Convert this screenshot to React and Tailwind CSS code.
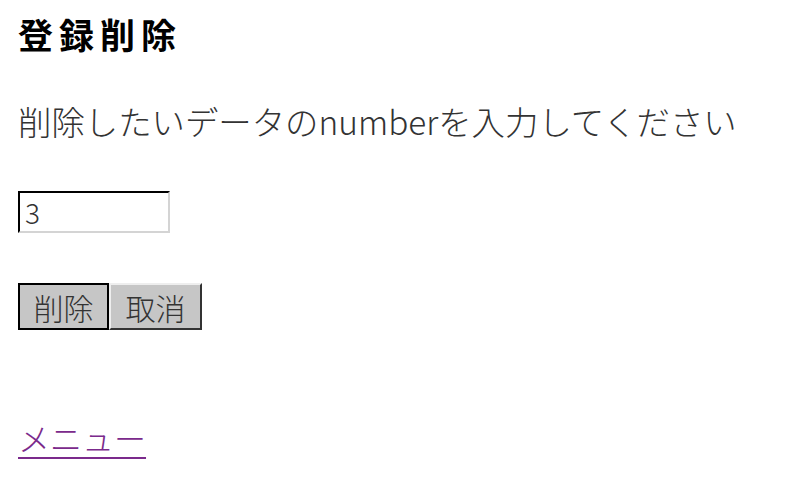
import React, { useState } from 'react';

const App = () => {
  const [num, setNum] = useState('3');

  return (
    <div
      className="w-[800px] h-[487px] bg-white text-[#222] overflow-hidden pl-[18px] pt-[12px] flex flex-col"
      style={{ fontFamily: '"Noto Sans CJK JP", "Noto Sans", sans-serif' }}
    >
      <h1 className="h-[42px] flex items-center text-[35px] font-bold tracking-[6px] text-black leading-none">登録削除</h1>

      <p className="mt-[43px] h-[48px] flex items-center text-[33.4px] font-light text-[#333] leading-none whitespace-nowrap">
        削除したいデータのnumberを入力してください
      </p>

      {/* Input */}
      <div className="mt-[46px] flex">
        <input
          value={num}
          onChange={e => setNum(e.target.value)}
          className="w-[152px] h-[42px] bg-white border-[2px] border-l-black border-t-black border-r-[#d4d4d4] border-b-[#d4d4d4] pl-[5px] text-[28px] font-light text-[#333] outline-none"
        />
      </div>

      {/* Buttons */}
      <div className="mt-[50px] flex">
        <button className="w-[91px] h-[47px] bg-[#c6c6c6] border-[2px] border-black text-[30px] font-light text-[#333] leading-none flex items-center justify-center">
          削除
        </button>
        <button className="w-[93px] h-[47px] bg-[#c6c6c6] border-[2px] border-l-[#eeeeee] border-t-[#eeeeee] border-r-[#333] border-b-[#333] text-[30px] font-light text-[#333] leading-none flex items-center justify-center">
          取消
        </button>
      </div>

      <div className="mt-[83px] h-[48px] flex items-center">
        <a href="#" className="text-[32px] font-light leading-none text-[#7b2a8c] underline decoration-[2px] underline-offset-[6px]">メニュー</a>
      </div>
    </div>
  );
};

export default App;
